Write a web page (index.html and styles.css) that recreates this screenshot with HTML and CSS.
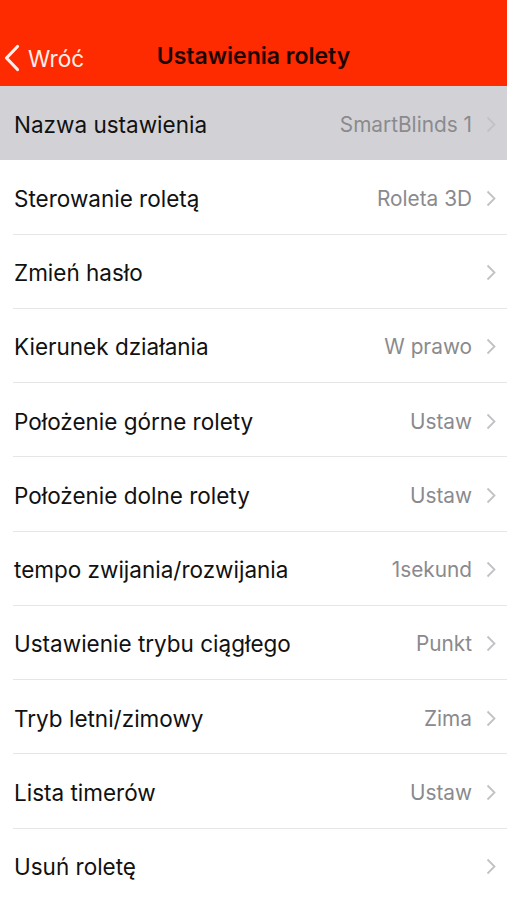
FILE: index.html
```html
<!DOCTYPE html>
<html lang="pl">
<head>
    <meta charset="UTF-8">
    <meta name="viewport" content="width=device-width, initial-scale=1.0">
    <title>Ustawienia rolety</title>
    <link rel="stylesheet" href="styles.css">
</head>
<body>
    <div class="navbar">
        <a class="back" href="#">
            <svg class="back-icon" width="16" height="28" viewBox="0 0 16 28"><path d="M13.5 2.5 L2.5 14 L13.5 25.5" fill="none" stroke="#fff" stroke-width="3.2" stroke-linecap="round" stroke-linejoin="round"/></svg>
            <span>Wróć</span>
        </a>
        <h1 class="title">Ustawienia rolety</h1>
    </div>

    <ul class="list">
        <li class="row active"><span class="label">Nazwa ustawienia</span><span class="value">SmartBlinds 1</span><svg class="chev" width="10" height="17" viewBox="0 0 10 17"><path d="M1.5 1.5 L8.5 8.5 L1.5 15.5" fill="none" stroke="#c2c2c6" stroke-width="1.8"/></svg></li>
        <li class="row"><span class="label">Sterowanie roletą</span><span class="value">Roleta 3D</span><svg class="chev" width="10" height="17" viewBox="0 0 10 17"><path d="M1.5 1.5 L8.5 8.5 L1.5 15.5" fill="none" stroke="#c2c2c6" stroke-width="1.8"/></svg></li>
        <li class="row"><span class="label">Zmień hasło</span><span class="value"></span><svg class="chev" width="10" height="17" viewBox="0 0 10 17"><path d="M1.5 1.5 L8.5 8.5 L1.5 15.5" fill="none" stroke="#c2c2c6" stroke-width="1.8"/></svg></li>
        <li class="row"><span class="label">Kierunek działania</span><span class="value">W prawo</span><svg class="chev" width="10" height="17" viewBox="0 0 10 17"><path d="M1.5 1.5 L8.5 8.5 L1.5 15.5" fill="none" stroke="#c2c2c6" stroke-width="1.8"/></svg></li>
        <li class="row"><span class="label">Położenie górne rolety</span><span class="value">Ustaw</span><svg class="chev" width="10" height="17" viewBox="0 0 10 17"><path d="M1.5 1.5 L8.5 8.5 L1.5 15.5" fill="none" stroke="#c2c2c6" stroke-width="1.8"/></svg></li>
        <li class="row"><span class="label">Położenie dolne rolety</span><span class="value">Ustaw</span><svg class="chev" width="10" height="17" viewBox="0 0 10 17"><path d="M1.5 1.5 L8.5 8.5 L1.5 15.5" fill="none" stroke="#c2c2c6" stroke-width="1.8"/></svg></li>
        <li class="row"><span class="label">tempo zwijania/rozwijania</span><span class="value">1sekund</span><svg class="chev" width="10" height="17" viewBox="0 0 10 17"><path d="M1.5 1.5 L8.5 8.5 L1.5 15.5" fill="none" stroke="#c2c2c6" stroke-width="1.8"/></svg></li>
        <li class="row"><span class="label">Ustawienie trybu ciągłego</span><span class="value">Punkt</span><svg class="chev" width="10" height="17" viewBox="0 0 10 17"><path d="M1.5 1.5 L8.5 8.5 L1.5 15.5" fill="none" stroke="#c2c2c6" stroke-width="1.8"/></svg></li>
        <li class="row"><span class="label">Tryb letni/zimowy</span><span class="value">Zima</span><svg class="chev" width="10" height="17" viewBox="0 0 10 17"><path d="M1.5 1.5 L8.5 8.5 L1.5 15.5" fill="none" stroke="#c2c2c6" stroke-width="1.8"/></svg></li>
        <li class="row"><span class="label">Lista timerów</span><span class="value">Ustaw</span><svg class="chev" width="10" height="17" viewBox="0 0 10 17"><path d="M1.5 1.5 L8.5 8.5 L1.5 15.5" fill="none" stroke="#c2c2c6" stroke-width="1.8"/></svg></li>
        <li class="row"><span class="label">Usuń roletę</span><span class="value"></span><svg class="chev" width="10" height="17" viewBox="0 0 10 17"><path d="M1.5 1.5 L8.5 8.5 L1.5 15.5" fill="none" stroke="#c2c2c6" stroke-width="1.8"/></svg></li>
    </ul>
</body>
</html>
```

FILE: styles.css
```css
*{
    box-sizing: border-box;
}

body{
    margin: 0;
    font-family: Inter, "Liberation Sans", Arial, sans-serif;
    background: #fff;
    overflow: hidden;
}

.navbar{
    height: 86px;
    background: #fe2a00;
    padding-top: 30px;
    display: flex;
    align-items: center;
    position: relative;
}
.back{
    display: flex;
    align-items: center;
    gap: 8px;
    padding-left: 4px;
    color: #fff;
    text-decoration: none;
    font-size: 22.6px;
    opacity: 0.92;
}
.back-icon{
    display: block;
}
.title{
    position: absolute;
    left: 0;
    right: 0;
    bottom: 16px;
    margin: 0;
    text-align: center;
    font-size: 23px;
    font-weight: 600;
    color: #1c0603;
    pointer-events: none;
}

.list{
    margin: 0;
    padding: 0;
    list-style: none;
}
.row{
    height: 74.25px;
    display: flex;
    align-items: center;
    padding: 2px 11px 0 14px;
    position: relative;
}
.row::after{
    content: "";
    position: absolute;
    left: 13px;
    right: 0;
    bottom: 0;
    height: 1px;
    background: #e6e6e8;
}
.row.active{
    background: #d2d2d6;
}
.row.active::after{
    display: none;
}
.label{
    flex: 1;
    font-size: 22.5px;
    color: #111;
}
.value{
    font-size: 20.8px;
    color: #8a8a8e;
    margin-right: 14px;
}
.chev{
    display: block;
}
```
